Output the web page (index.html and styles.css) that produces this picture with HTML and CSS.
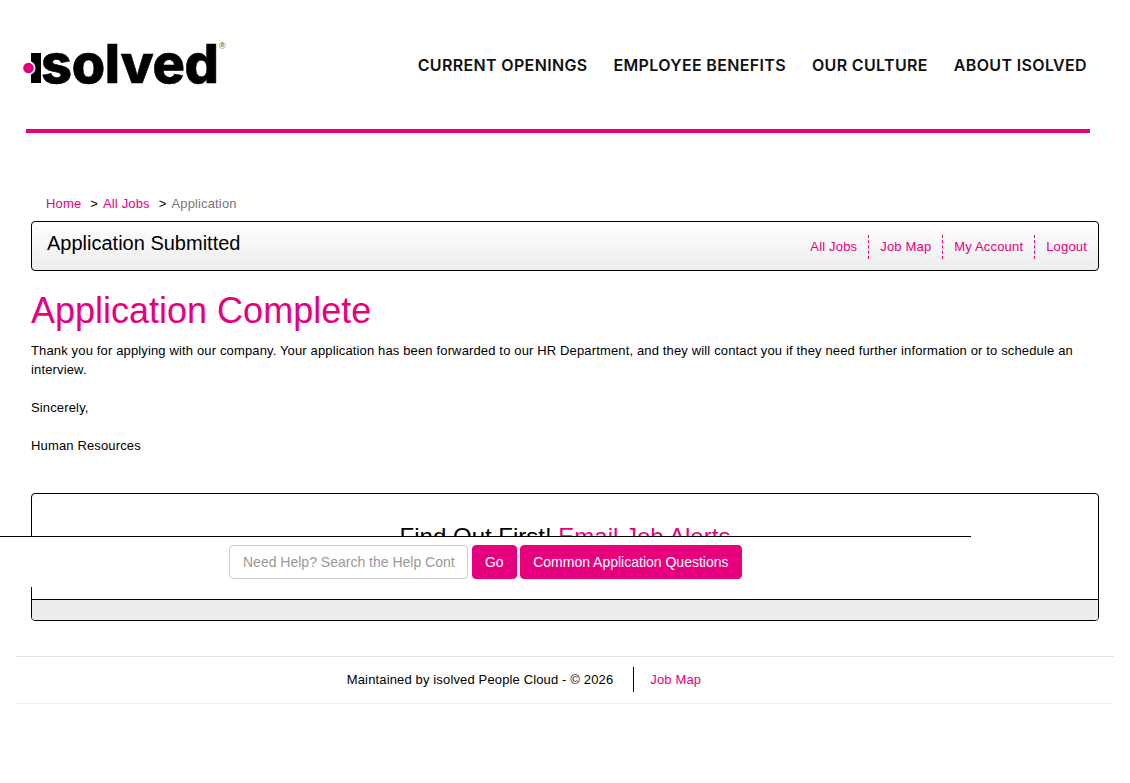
FILE: index.html
```html
<!DOCTYPE html>
<html lang="en">
<head>
<meta charset="utf-8">
<title>Application Complete</title>
<link rel="stylesheet" href="styles.css">
</head>
<body>
<header class="site-header">
  <div class="header-row">
    <a class="logo" href="#">
      <svg class="logo-mark" width="30" height="44" viewBox="0 0 30 44" aria-hidden="true">
        <rect x="8" y="9" width="10" height="30" fill="#000"/>
        <circle cx="5.5" cy="24" r="7" fill="#fff"/>
        <circle cx="5.5" cy="24" r="5.3" fill="#e6007e"/>
      </svg>
      <span class="logo-word">solved</span><span class="logo-reg">®</span>
    </a>
    <nav class="main-nav">
      <a href="#">CURRENT OPENINGS</a>
      <a href="#">EMPLOYEE BENEFITS</a>
      <a href="#">OUR CULTURE</a>
      <a href="#">ABOUT ISOLVED</a>
    </nav>
  </div>
  <div class="header-rule"></div>
</header>

<main class="content">
  <div class="breadcrumb">
    <a href="#">Home</a><span class="sep">&gt;</span><a href="#">All Jobs</a><span class="sep">&gt;</span><span class="current">Application</span>
  </div>
  <div class="title-bar">
    <h2>Application Submitted</h2>
    <ul class="sub-nav">
      <li><a href="#">All Jobs</a></li>
      <li><a href="#">Job Map</a></li>
      <li><a href="#">My Account</a></li>
      <li><a href="#">Logout</a></li>
    </ul>
  </div>
  <h1>Application Complete</h1>
  <p class="message">Thank you for applying with our company. Your application has been forwarded to our HR Department, and they will contact you if they need further information or to schedule an interview.</p>
  <p class="message">Sincerely,</p>
  <p class="message">Human Resources</p>

  <section class="alerts">
    <div class="alerts-body">
      <h3>Find Out First! <a href="#">Email Job Alerts</a></h3>
    </div>
    <div class="alerts-foot"></div>
  </section>
</main>

<footer class="site-footer">
  <span>Maintained by isolved People Cloud - © 2026</span>
  <a href="#">Job Map</a>
</footer>

<div class="help-bar">
  <input class="help-input" type="text" placeholder="Need Help? Search the Help Content">
  <button class="btn go" type="button">Go</button>
  <button class="btn" type="button">Common Application Questions</button>
</div>
</body>
</html>
```

FILE: styles.css
```css
* { box-sizing: border-box; }
html, body { margin: 0; padding: 0; }
body {
  position: relative;
  min-height: 783px;
  background: #fff;
  color: #000;
  font-family: "Liberation Sans", Arial, sans-serif;
  font-size: 13px;
  letter-spacing: 0.145px;
}
a { color: #e6007e; text-decoration: none; }

.site-header { padding: 0 40px 0 26px; height: 133px; }
.header-row { display: flex; justify-content: space-between; height: 129px; }
.logo { position: relative; display: block; width: 200px; margin: 40px 0 0 -3px; height: 50px; color: #000; }
.logo-mark { position: absolute; left: 0; top: 4px; }
.logo-word { position: absolute; left: 18px; top: -3px; font: 800 54px/1 "Inter", sans-serif; letter-spacing: -0.3px; -webkit-text-stroke: 0.6px #000; }
.logo-reg { position: absolute; left: 196px; top: 1px; font-size: 9px; letter-spacing: 0; color: #555; }
.main-nav { display: flex; gap: 26px; padding-top: 56px; padding-right: 3px; }
.main-nav a { color: #111; font: 600 16px/19px "Inter", sans-serif; letter-spacing: 0.34px; }
.header-rule { height: 4px; background: #e6007e; }

.content { padding: 0 31px; }
.breadcrumb { display: flex; margin-top: 63px; padding-left: 15px; height: 25px; line-height: 15px; color: #000; }
.breadcrumb .sep { margin: 0 5px 0 9px; }
.breadcrumb .current { color: #777; }
.title-bar {
  display: flex; justify-content: space-between;
  height: 50px;
  border: 1px solid #000;
  border-radius: 4px;
  background: linear-gradient(#fff, #ededed);
  padding: 0 11px 0 15px;
}
.title-bar h2 { margin: 9px 0 0; font-size: 20px; line-height: 24px; font-weight: 400; letter-spacing: 0; }
.sub-nav { display: flex; list-style: none; margin: 13px 0 0; padding: 0; height: 24px; letter-spacing: 0.17px; }
.sub-nav li { padding: 4px 11px 0; line-height: 16px; border-left: 1px dashed #e6007e; }
.sub-nav li:first-child { border-left: 0; }
.sub-nav li:last-child { padding-right: 0; }
h1 { margin: 18px 0 8px; color: #e6007e; font-size: 36px; line-height: 44px; font-weight: 400; letter-spacing: 0; }
.message { margin: 0 0 19px; line-height: 19px; }

.alerts { margin-top: 38px; height: 128px; border: 1px solid #000; border-radius: 4px; overflow: hidden; display: flex; flex-direction: column; }
.alerts-body { flex: 1; text-align: center; }
.alerts-body h3 { margin: 29px 0 0; font-size: 24px; line-height: 28px; font-weight: 400; letter-spacing: 0; }
.alerts-foot { height: 21px; border-top: 1px solid #000; background: #ededed; }

.site-footer {
  display: flex; align-items: center; justify-content: center;
  margin: 35px 16px 0;
  height: 48px;
  border-top: 1px solid #e2e2e2;
  border-bottom: 1px solid #f2f2f2;
  padding: 0 82px 2px 0;
}
.site-footer a { margin-left: 20px; padding-left: 16px; border-left: 1px solid #000; line-height: 25px; }

.help-bar {
  position: absolute; left: 0; top: 536px;
  width: 971px; height: 51px;
  display: flex; align-items: flex-start; justify-content: flex-end;
  padding: 8px 229px 0 0;
  background: #fff;
  border-top: 1px solid #000;
}
.help-input {
  width: 239px; height: 34px; margin-right: 4px;
  padding: 0 12px 0 13px;
  border: 1px solid #ccc; border-radius: 4px;
  font: 14px "Liberation Sans", Arial, sans-serif;
  color: #555;
}
.help-input::placeholder { color: #999; opacity: 1; }
.btn {
  height: 34px; padding: 0 12.5px; margin-right: 3px;
  border: 1px solid #e6007e; border-radius: 4px;
  background: #e6007e; color: #fff;
  font: 14px "Liberation Sans", Arial, sans-serif;
}
.btn.go { padding: 0 12px; }
.btn:last-child { margin-right: 0; }
```
